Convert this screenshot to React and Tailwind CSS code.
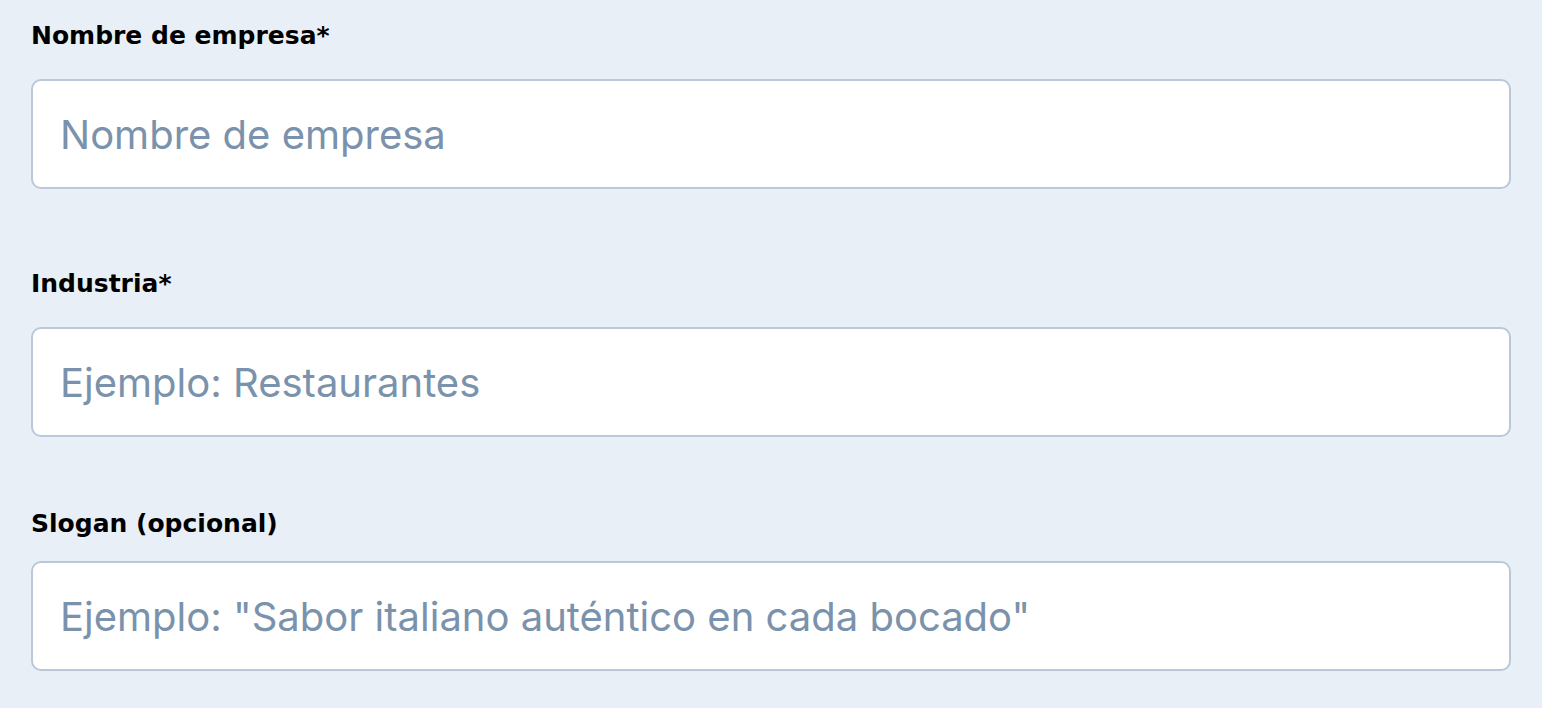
import React, { useState } from 'react';

const fields = [
  { label: 'Nombre de empresa*', placeholder: 'Nombre de empresa', top: 'mt-0', gap: 'mt-[27px]' },
  { label: 'Industria*', placeholder: 'Ejemplo: Restaurantes', top: 'mt-[79px]', gap: 'mt-[27px]' },
  { label: 'Slogan (opcional)', placeholder: 'Ejemplo: "Sabor italiano auténtico en cada bocado"', top: 'mt-[71px]', gap: 'mt-[21px]' },
];

const App = () => {
  const [values, setValues] = useState({});

  return (
    <div className="min-h-screen bg-[#e9eff7] px-[31px] pt-[20px] pb-8 font-['Inter','Liberation_Sans',sans-serif]">
      {fields.map((f, i) => (
        <div key={i} className={f.top}>
          <label className="block font-['DejaVu_Sans',sans-serif] text-[25px] leading-[32px] font-bold text-black">
            {f.label}
          </label>
          <input
            type="text"
            value={values[i] || ''}
            onChange={(e) => setValues({ ...values, [i]: e.target.value })}
            placeholder={f.placeholder}
            className={`${f.gap} block w-[1480px] h-[110px] bg-white border-2 border-[#bac8d8] rounded-[10px] px-[27px] text-[40px] text-[#2c3e50] placeholder:text-[#7a92ab] outline-none`}
          />
        </div>
      ))}
    </div>
  );
};

export default App;
